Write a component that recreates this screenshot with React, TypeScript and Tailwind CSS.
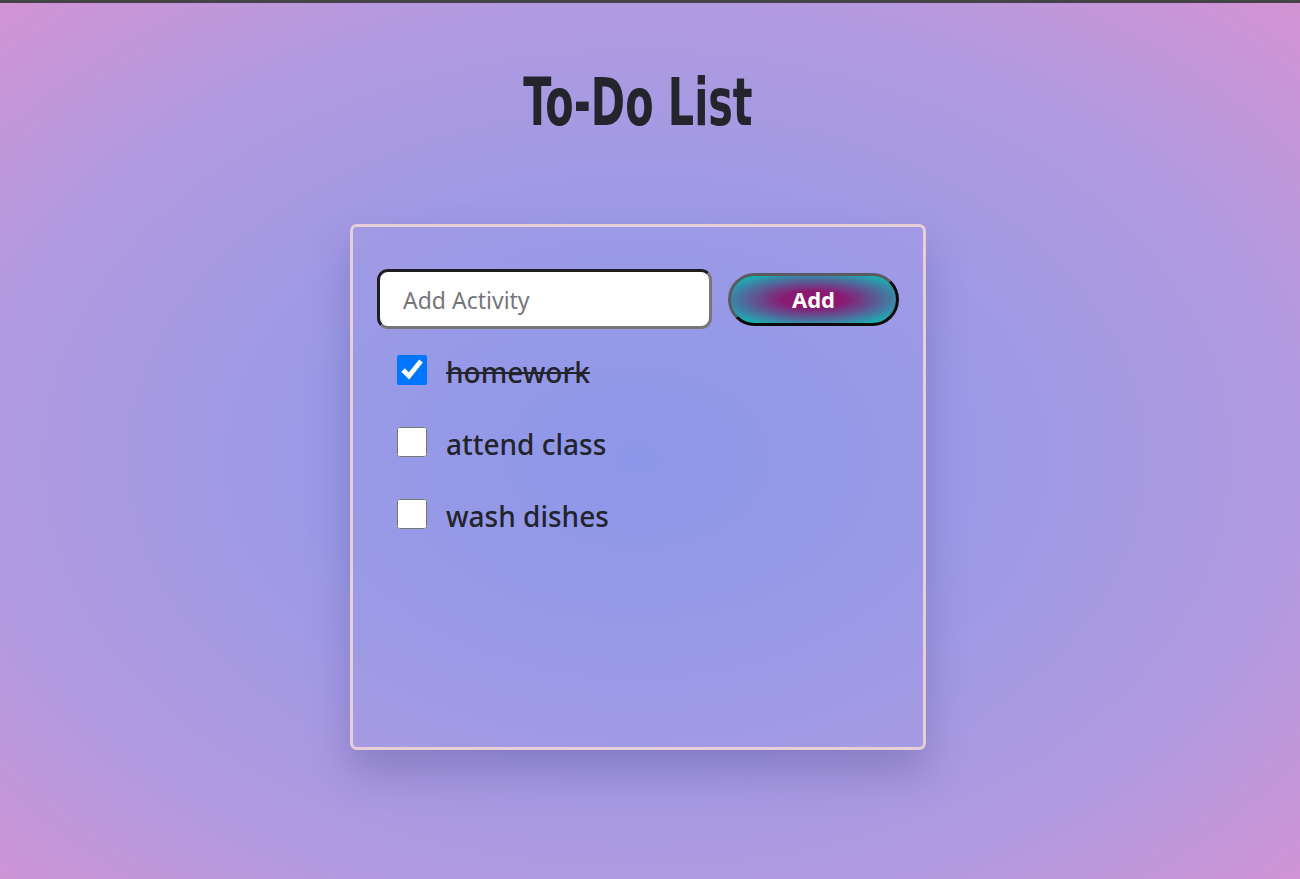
import { useState } from "react";

const initialTodos = [
  { id: 1, text: "homework", done: true },
  { id: 2, text: "attend class", done: false },
  { id: 3, text: "wash dishes", done: false },
];

const App = () => {
  const [todos, setTodos] = useState(initialTodos);
  const [value, setValue] = useState("");

  const toggle = (id: number) =>
    setTodos(todos.map((t) => (t.id === id ? { ...t, done: !t.done } : t)));

  const add = () => {
    if (!value.trim()) return;
    setTodos([...todos, { id: Date.now(), text: value.trim(), done: false }]);
    setValue("");
  };

  return (
    <div className="min-h-screen w-full border-t-[3px] border-[#444446] bg-[radial-gradient(ellipse_at_49%_52%,#8d97e9_0%,#9b9ae6_35%,#b19ae0_70%,#d493d3_100%)] pr-[24px] font-['Noto_Sans','Open_Sans',sans-serif] text-[#23232b]">
      <div className="flex flex-col items-center">
        <h1 className="mt-[55px] font-['DejaVu_Sans_Condensed',sans-serif] text-[62px] leading-[90px] font-bold text-[#24242c] scale-x-[0.74] scale-y-[1.06]">
          To-Do List
        </h1>
        <div className="mt-[76px] flex h-[526px] w-[576px] flex-col rounded-[7px] border-[3px] border-[#e6cfd6] px-[24px] pt-[42px] shadow-[0_22px_40px_rgba(60,50,120,0.28)]">
          <div className="flex items-center justify-between">
            <input
              value={value}
              onChange={(e) => setValue(e.target.value)}
              placeholder="Add Activity"
              className="h-[60px] w-[335px] rounded-[11px] border-[3px] border-t-[#1e1e22] border-l-[#1e1e22] border-r-[#76767a] border-b-[#76767a] bg-white px-[23px] pt-[2px] text-[23px] text-[#23232b] outline-none placeholder:text-[#76767a]"
            />
            <button
              onClick={add}
              className="h-[53px] w-[171px] rounded-full border-[3px] border-t-[#5a5a60] border-l-[#5a5a60] border-r-[#0a0a0a] border-b-[#0a0a0a] bg-[radial-gradient(ellipse_at_center,#8e1570_0%,#8a1a72_26%,#4f6a9c_60%,#1aafb2_86%,#18b2b0_100%)] pt-[1px] text-[22px] font-bold text-white"
            >
              Add
            </button>
          </div>
          <ul className="mt-[26px] flex flex-col gap-[42px] pl-[20px]">
            {todos.map((t) => (
              <li key={t.id} className="flex h-[30px] items-center gap-[19px]">
                <input
                  type="checkbox"
                  checked={t.done}
                  onChange={() => toggle(t.id)}
                  className="m-0 h-[30px] w-[30px] accent-[#0075ff]"
                />
                <span
                  className={`pt-[3px] text-[28px] leading-[30px] font-medium ${t.done ? "line-through" : ""}`}
                >
                  {t.text}
                </span>
              </li>
            ))}
          </ul>
        </div>
      </div>
    </div>
  );
};

export default App;
